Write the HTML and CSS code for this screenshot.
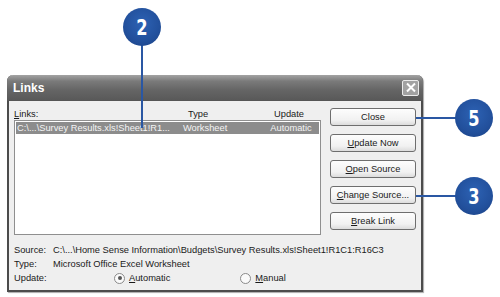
FILE: index.html
```html
<!DOCTYPE html>
<html lang="en">
<head>
  <meta charset="UTF-8" />
  <title>Links</title>
  <link rel="stylesheet" href="styles.css">
</head>
<body>

  <div class="dialog">
    <div class="titlebar">
      <span class="title">Links</span>
      <span class="close-x">
        <svg width="12" height="11" viewBox="0 0 12 11">
          <path d="M2 1.5 L10 9.5 M10 1.5 L2 9.5" stroke="#fff" stroke-width="2" fill="none"/>
        </svg>
      </span>
    </div>

    <div class="content">
      <div class="top">
        <div class="list-col">
          <div class="list-head">
            <span class="col-src"><u>L</u>inks:</span>
            <span class="col-type">Type</span>
            <span class="col-upd">Update</span>
          </div>
          <div class="listbox">
            <div class="row selected">
              <span class="col-src">C:\...\Survey Results.xls!Sheet1!R1...</span>
              <span class="col-type">Worksheet</span>
              <span class="col-upd">Automatic</span>
            </div>
          </div>
        </div>

        <div class="buttons">
          <button class="btn">Close</button>
          <button class="btn"><u>U</u>pdate Now</button>
          <button class="btn"><u>O</u>pen Source</button>
          <button class="btn"><u>C</u>hange Source...</button>
          <button class="btn"><u>B</u>reak Link</button>
        </div>
      </div>

      <div class="details">
        <div class="line"><span class="label">Source:</span>C:\...\Home Sense Information\Budgets\Survey Results.xls!Sheet1!R1C1:R16C3</div>
        <div class="line"><span class="label">Type:</span>Microsoft Office Excel Worksheet</div>
        <div class="line">
          <span class="label wide">Update:</span>
          <span class="radio checked"></span><span class="radio-text"><u>A</u>utomatic</span>
          <span class="radio second"></span><span class="radio-text"><u>M</u>anual</span>
        </div>
      </div>
    </div>
  </div>

  <div class="callout c2"><span>2</span></div>
  <div class="callout c5"><span>5</span></div>
  <div class="callout c3"><span>3</span></div>
  <div class="leader l2"></div>
  <div class="leader l5"></div>
  <div class="leader l3"></div>

</body>
</html>
```

FILE: styles.css
```css
* {
  margin: 0;
  padding: 0;
  box-sizing: border-box;
}

html, body {
  width: 500px;
  height: 297px;
  background: #fff;
  font-family: "Liberation Sans", Arial, sans-serif;
  font-size: 9.3px;
  color: #1a1a1a;
  overflow: hidden;
}

body {
  position: relative;
  padding: 75px 0 0 7px;
}

.dialog {
  width: 416px;
  height: 217px;
  background: #efefef;
  border: 2px solid #4c4c4c;
  border-top: none;
  border-radius: 6px 6px 0 0;
  box-shadow: 1px 1px 1px #aaa;
}

.titlebar {
  height: 26px;
  margin: 0 -2px;
  border-radius: 6px 6px 0 0;
  background: linear-gradient(#a3a3a3, #7a7a7a 25%, #656565 60%, #595959);
  border-bottom: 1px solid #555;
  display: flex;
  align-items: center;
  justify-content: space-between;
  padding: 0 4px 0 6px;
}

.title {
  color: #fff;
  font-weight: bold;
  font-size: 12px;
}

.close-x {
  width: 17px;
  height: 16px;
  background: #a2a2a2;
  border: 1px solid #ececec;
  border-radius: 2px;
  display: flex;
  align-items: center;
  justify-content: center;
}

.content {
  padding: 7px 5px 0 5px;
}

.top {
  display: flex;
  gap: 9px;
}

.list-col {
  width: 307px;
}

.list-head {
  height: 12px;
  display: flex;
  align-items: center;
}

.col-src {
  width: 166px;
  white-space: nowrap;
  overflow: hidden;
}

.col-type {
  width: 80px;
}

.col-upd {
  width: 56px;
  text-align: center;
}

.list-head .col-src { width: 174px; }
.list-head .col-type { width: 73px; }

.listbox {
  height: 115px;
  background: #fff;
  border: 1px solid #8f8f8f;
  padding: 1px;
}

.row {
  height: 12px;
  display: flex;
  align-items: center;
  padding-left: 1px;
}

.row.selected {
  background: #8c8c8c;
  color: #f4f4f4;
}

.buttons {
  width: 86px;
  display: flex;
  flex-direction: column;
  gap: 8px;
}

.btn {
  height: 18px;
  font-family: "Liberation Sans", Arial, sans-serif;
  font-size: 9.3px;
  color: #1a1a1a;
  background: linear-gradient(#fdfdfd, #f1f1f1 70%, #dcdcdc);
  border: 1px solid #6e6e6e;
  border-radius: 3px;
}

.details {
  margin-top: 8px;
}

.line {
  height: 14px;
  display: flex;
  align-items: center;
  white-space: nowrap;
}

.label {
  width: 39px;
}

.label.wide {
  width: 100px;
}

.radio {
  width: 11px;
  height: 11px;
  border: 1px solid #8a8a8a;
  border-radius: 50%;
  background: #fafafa;
  display: flex;
  align-items: center;
  justify-content: center;
  margin-right: 4px;
}

.radio.checked::after {
  content: "";
  width: 4px;
  height: 4px;
  border-radius: 50%;
  background: #555;
}

.radio.second {
  margin-left: 70px;
}

.callout {
  position: absolute;
  width: 38px;
  height: 38px;
  border-radius: 50%;
  background: radial-gradient(circle at 50% 40%, #2d62b4, #22509c 60%, #1a3f82);
  color: #fff;
  font-family: "DejaVu Sans Condensed", "DejaVu Sans", sans-serif;
  font-weight: bold;
  font-size: 22px;
  display: flex;
  align-items: center;
  justify-content: center;
  z-index: 5;
}

.callout span {
  display: block;
  transform: scaleX(0.82);
}

.c2 { left: 123px; top: 8px; }
.c5 { left: 455px; top: 99px; }
.c3 { left: 455px; top: 177px; }

.leader {
  position: absolute;
  background: #2a57a3;
  z-index: 4;
}

.l2 { left: 141px; top: 40px; width: 2px; height: 88px; }
.l5 { left: 416px; top: 117px; width: 44px; height: 2px; }
.l3 { left: 416px; top: 195px; width: 44px; height: 2px; }
```
